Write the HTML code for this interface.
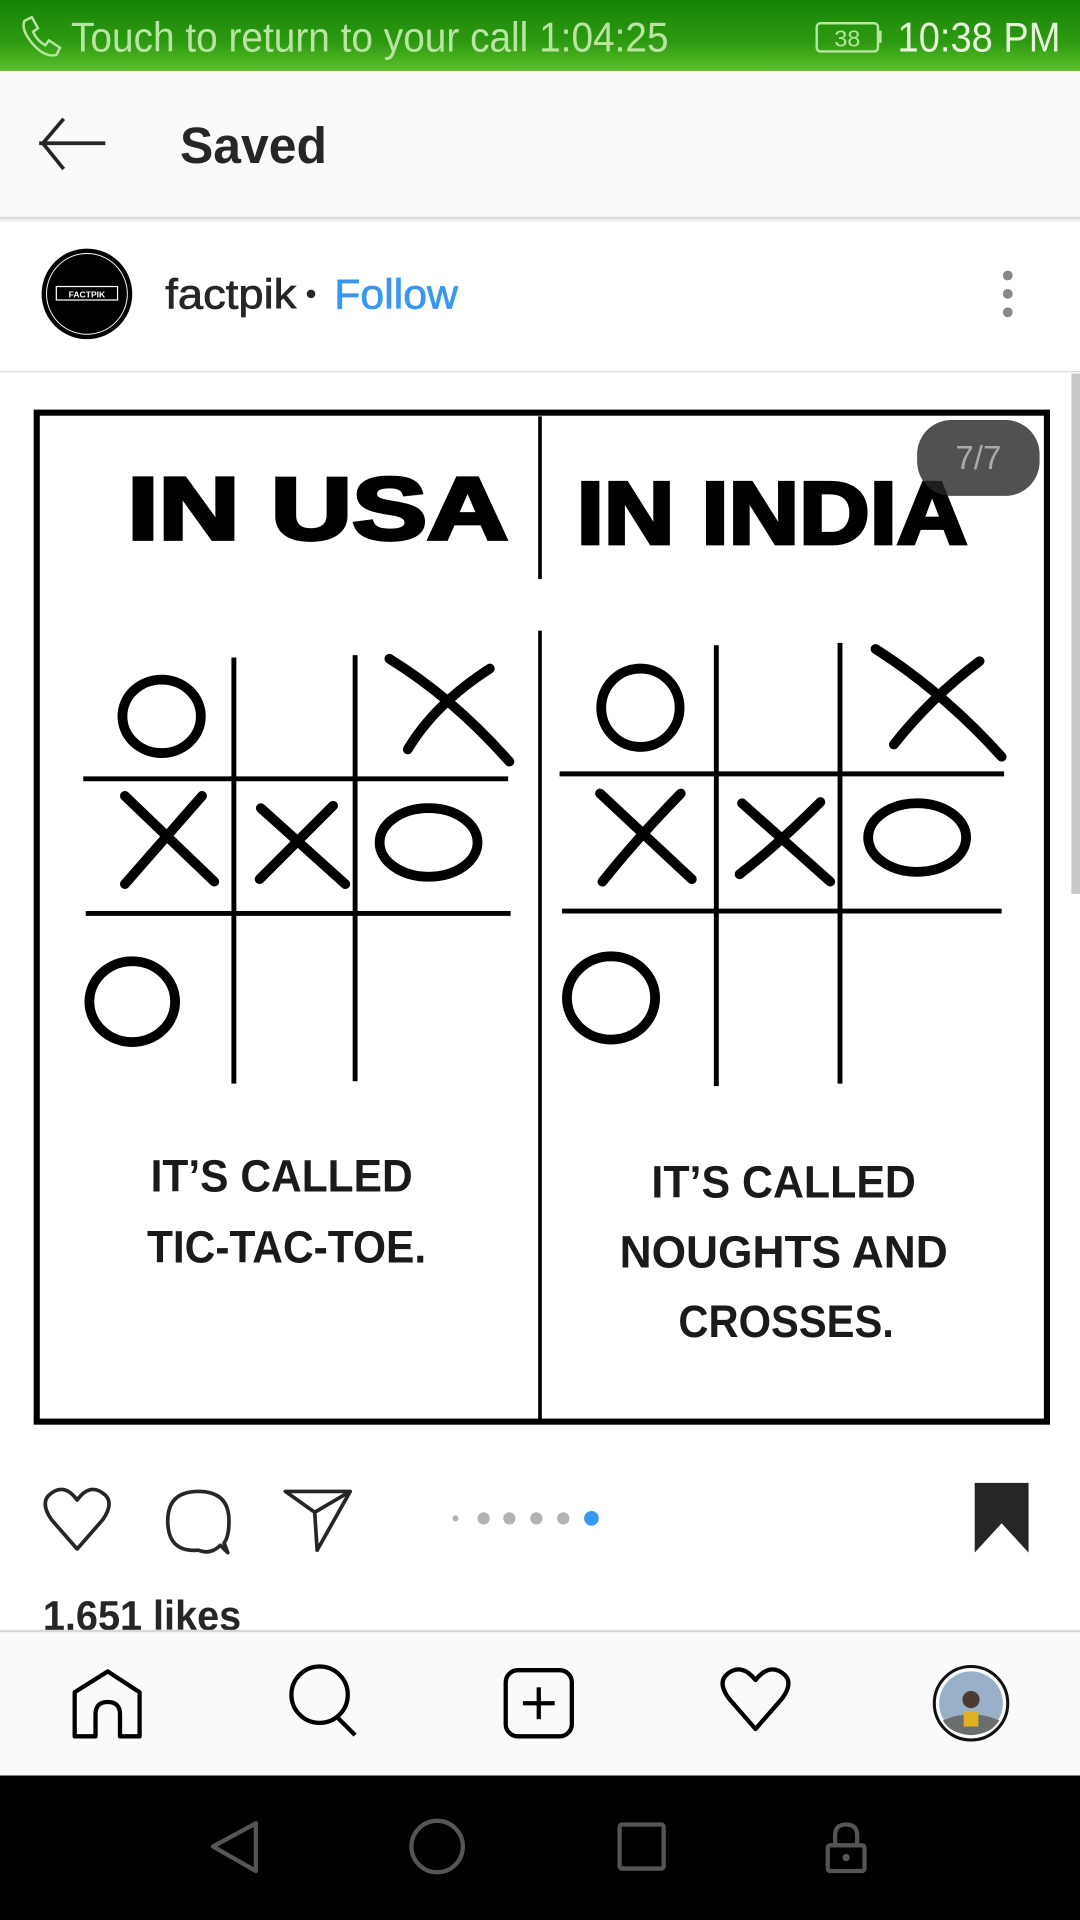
<!DOCTYPE html>
<html><head><meta charset="utf-8"><style>
html,body{margin:0;padding:0;width:1080px;height:1920px;overflow:hidden;background:#fff}
svg{display:block}
text{font-family:"Liberation Sans",sans-serif}
</style></head><body>
<svg width="1080" height="1920" viewBox="0 0 882 1568" preserveAspectRatio="none">
<defs>
<linearGradient id="g" x1="0" y1="0" x2="0" y2="1"><stop offset="0" stop-color="#178306"/><stop offset="0.6" stop-color="#2e9a12"/><stop offset="1" stop-color="#5cc22a"/></linearGradient>
</defs>
<rect x="0" y="0" width="882" height="58" fill="url(#g)"/>
<path d="M20 17 l6 -3 l5 9 l-4 3 q3 7 10 11 l3 -4 l9 6 l-3 6 q-10 2 -20 -10 q-9 -11 -6 -18z" fill="none" stroke="#b8e6a0" stroke-width="2"/>
<text x="58" y="42" font-size="34" fill="#b8e6a0" textLength="488" lengthAdjust="spacingAndGlyphs">Touch to return to your call 1:04:25</text>
<rect x="667" y="19" width="50" height="23" rx="3" fill="none" stroke="#b8e6a0" stroke-width="2"/>
<rect x="717" y="25" width="3" height="10" fill="#b8e6a0"/>
<text x="692" y="38" font-size="19" fill="#b8e6a0" text-anchor="middle">38</text>
<text x="733" y="42" font-size="34" fill="#e6f5dc" textLength="133" lengthAdjust="spacingAndGlyphs">10:38 PM</text>
<rect x="0" y="58" width="882" height="120" fill="#fafafa"/>
<rect x="0" y="177" width="882" height="2" fill="#ddd"/>
<rect x="0" y="179" width="882" height="2" fill="#eee"/>
<path d="M86 117 H32 M52 97 L35 117 L52 138" fill="none" stroke="#262626" stroke-width="3"/>
<text x="147" y="133" font-size="42" font-weight="bold" fill="#262626" textLength="120" lengthAdjust="spacingAndGlyphs">Saved</text>
<circle cx="71" cy="240" r="37" fill="#000"/>
<circle cx="71" cy="240" r="33" fill="none" stroke="#fff" stroke-width="0.8"/>
<rect x="46" y="234" width="50" height="11" fill="none" stroke="#fff" stroke-width="1"/>
<text x="71" y="243" font-size="7" fill="#fff" text-anchor="middle" font-weight="bold">FACTPIK</text>
<text x="135" y="252" font-size="34" fill="#262626" stroke="#262626" stroke-width="0.6" textLength="107" lengthAdjust="spacingAndGlyphs">factpik</text>
<circle cx="254" cy="240" r="3.5" fill="#262626"/>
<text x="273" y="252" font-size="34" fill="#3897f0" stroke="#3897f0" stroke-width="0.6" textLength="101" lengthAdjust="spacingAndGlyphs">Follow</text>
<circle cx="823" cy="225" r="4" fill="#888"/><circle cx="823" cy="240" r="4" fill="#888"/><circle cx="823" cy="255" r="4" fill="#888"/>
<rect x="0" y="303" width="882" height="1" fill="#dbdbdb"/>
<rect x="875" y="305" width="7" height="425" fill="#c8c8c8"/>
<rect x="30" y="337" width="825" height="824" fill="none" stroke="#000" stroke-width="5"/>
<line x1="441" y1="340" x2="441" y2="473" stroke="#000" stroke-width="3"/>
<line x1="441" y1="515" x2="441" y2="1160" stroke="#000" stroke-width="3"/>
<g font-weight="bold" fill="#000" stroke="#000" stroke-width="3" font-size="72">
<text x="104" y="440" textLength="311" lengthAdjust="spacingAndGlyphs">IN USA</text>
<text x="471" y="444" textLength="319" lengthAdjust="spacingAndGlyphs">IN INDIA</text>
</g>
<rect x="749" y="343" width="100" height="62" rx="28" fill="#262626" opacity="0.8"/>
<text x="799" y="383" font-size="27" fill="#aaa" text-anchor="middle">7/7</text>
<g stroke="#000" stroke-width="4" fill="none">
<line x1="191" y1="537" x2="191" y2="885"/><line x1="290" y1="535" x2="290" y2="883"/>
<line x1="68" y1="636" x2="415" y2="636"/><line x1="70" y1="746" x2="417" y2="746"/>
<line x1="585" y1="527" x2="585" y2="887"/><line x1="686" y1="525" x2="686" y2="885"/>
<line x1="457" y1="632" x2="820" y2="632"/><line x1="459" y1="744" x2="818" y2="744"/>
</g>
<g stroke="#000" stroke-width="8" fill="none" stroke-linecap="round">
<ellipse cx="132" cy="585" rx="32" ry="30"/>
<path d="M318 538 Q370 570 416 622 M400 546 Q355 575 333 612"/>
<path d="M102 650 L175 720 M165 650 Q130 690 102 722"/>
<path d="M213 660 L282 722 M272 658 Q240 690 212 718"/>
<ellipse cx="350" cy="688" rx="40" ry="28"/>
<ellipse cx="108" cy="818" rx="35" ry="33"/>
<ellipse cx="523" cy="578" rx="32" ry="32"/>
<path d="M715 530 Q770 565 818 618 M800 540 Q760 570 730 608"/>
<path d="M490 648 L565 718 M556 648 Q520 685 492 720"/>
<path d="M606 656 L678 720 M670 655 Q635 690 604 714"/>
<ellipse cx="749" cy="684" rx="40" ry="28"/>
<ellipse cx="499" cy="815" rx="36" ry="34"/>
</g>
<g font-weight="bold" fill="#1a1a1a" font-size="37" text-anchor="middle">
<text x="230" y="973" textLength="214" lengthAdjust="spacingAndGlyphs">IT’S CALLED</text>
<text x="234" y="1031" textLength="228" lengthAdjust="spacingAndGlyphs">TIC-TAC-TOE.</text>
<text x="640" y="978" textLength="216" lengthAdjust="spacingAndGlyphs">IT’S CALLED</text>
<text x="640" y="1035" textLength="268" lengthAdjust="spacingAndGlyphs">NOUGHTS AND</text>
<text x="642" y="1092" textLength="176" lengthAdjust="spacingAndGlyphs">CROSSES.</text>
</g>
<g stroke="#262626" stroke-width="3" fill="none" stroke-linejoin="round">
<path d="M63 1265 L42 1241 Q33 1228 40 1221 Q52 1210 63 1225 Q74 1210 86 1221 Q93 1228 84 1241 Z"/>
<path d="M180 1262 Q172 1270 162 1266 Q137 1268 137 1242 Q137 1218 162 1218 Q187 1218 187 1242 Q187 1255 183 1260 L186 1268 Z"/>
<path d="M233 1218 L286 1218 L259 1266 L257 1235 Z M257 1235 L286 1218"/>
</g>
<circle cx="372" cy="1240" r="2.5" fill="#b3b3b3"/>
<circle cx="395" cy="1240" r="5" fill="#b3b3b3"/><circle cx="416" cy="1240" r="5" fill="#b3b3b3"/>
<circle cx="438" cy="1240" r="5" fill="#b3b3b3"/><circle cx="460" cy="1240" r="5" fill="#b3b3b3"/>
<circle cx="483" cy="1240" r="6" fill="#3897f0"/>
<path d="M796 1211 H840 V1268 L818 1244 L796 1268 Z" fill="#262626"/>
<text x="35" y="1331" font-size="34" font-weight="bold" fill="#262626" textLength="162" lengthAdjust="spacingAndGlyphs">1,651 likes</text>
<rect x="0" y="1332" width="882" height="118" fill="#fafafa"/>
<rect x="0" y="1331" width="882" height="2" fill="#d8d8d8"/>
<g stroke="#000" stroke-width="3.5" fill="none" stroke-linejoin="round">
<path d="M61 1418 V1382 L88 1365 L114 1382 V1418 H98 V1400 Q98 1390 88 1390 Q78 1390 78 1400 V1418 Z"/>
<circle cx="261" cy="1384" r="23"/><line x1="275" y1="1402" x2="290" y2="1417"/>
<rect x="413" y="1364" width="54" height="54" rx="10"/><line x1="440" y1="1378" x2="440" y2="1404"/><line x1="427" y1="1391" x2="453" y2="1391"/>
<path d="M617 1412 L596 1388 Q586 1375 593 1368 Q605 1357 617 1372 Q629 1357 641 1368 Q648 1375 638 1388 Z"/>
</g>
<circle cx="793" cy="1391" r="30" fill="none" stroke="#111" stroke-width="2.5"/>
<circle cx="793" cy="1391" r="26" fill="#9ab0c8"/>
<path d="M770 1405 Q793 1395 816 1405 Q810 1416 793 1417 Q776 1416 770 1405Z" fill="#6b6e6e"/>
<circle cx="793" cy="1388" r="7" fill="#4a3a30"/><rect x="787" y="1398" width="12" height="12" fill="#e0b020"/>
<rect x="0" y="1450" width="882" height="118" fill="#000"/>
<g stroke="#555" stroke-width="3.5" fill="none" stroke-linejoin="round">
<path d="M209 1489 V1528 L174 1508 Z"/>
<circle cx="357" cy="1508" r="21"/>
<rect x="506" y="1490" width="36" height="36" rx="2"/>
<rect x="676" y="1507" width="30" height="21" rx="2"/><path d="M682 1507 V1499 Q682 1490 691 1490 Q700 1490 700 1499 V1507"/>
</g>
<circle cx="691" cy="1517" r="3" fill="#555"/>
</svg>
</body></html>
